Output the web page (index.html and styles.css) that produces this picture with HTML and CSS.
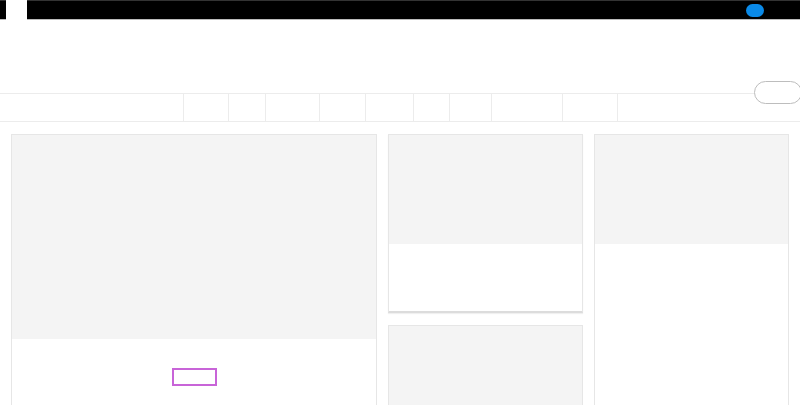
FILE: index.html
```html
<!DOCTYPE html>
<html lang="en">
<head>
    <meta charset="UTF-8">
    <meta name="viewport" content="width=device-width, initial-scale=1.0">
    <title>Home</title>
    <link rel="stylesheet" href="styles.css">
</head>
<body>
    <div class="topbar">
        <div class="topbar-logo"></div>
        <div class="topbar-dot"></div>
    </div>

    <header class="masthead">
        <div class="masthead-space"></div>
        <button class="pill-btn" type="button"></button>
        <nav class="nav">
            <div class="nav-item w-first"></div>
            <div class="nav-item w45"></div>
            <div class="nav-item w37"></div>
            <div class="nav-item w54"></div>
            <div class="nav-item w46"></div>
            <div class="nav-item w48"></div>
            <div class="nav-item w36"></div>
            <div class="nav-item w42"></div>
            <div class="nav-item w71"></div>
            <div class="nav-item w55"></div>
        </nav>
    </header>

    <main class="grid">
        <div class="card card-lead">
            <div class="card-img img-lead"></div>
            <div class="card-body body-lead">
                <div class="tag-box"></div>
            </div>
        </div>

        <div class="col">
            <div class="card card-small">
                <div class="card-img img-small"></div>
                <div class="card-body body-small"></div>
            </div>
            <div class="card card-rest">
                <div class="card-img img-rest"></div>
            </div>
        </div>

        <div class="col">
            <div class="card card-tall">
                <div class="card-img img-small"></div>
                <div class="card-body"></div>
            </div>
        </div>
    </main>
</body>
</html>
```

FILE: styles.css
```css
* {
    margin: 0;
    padding: 0;
    box-sizing: border-box;
    font-family: 'Liberation Sans', Arial, sans-serif;
}

body {
    background: #ffffff;
    color: #333;
    width: 800px;
    height: 405px;
    overflow: hidden;
}

.topbar {
    height: 20px;
    background: #000;
    border-top: 1px solid #333;
    border-bottom: 1px solid #bbb;
    display: flex;
    align-items: center;
    justify-content: space-between;
    padding: 0 36px 0 6px;
}

.topbar-logo {
    width: 21px;
    height: 20px;
    margin-top: -1px;
    background: #fff;
    align-self: flex-start;
}

.topbar-dot {
    width: 18px;
    height: 13px;
    border-radius: 7px;
    background: #0a8ae8;
}

.masthead {
    position: relative;
}

.masthead-space {
    height: 73px;
}

.pill-btn {
    position: absolute;
    top: 61px;
    right: -2px;
    width: 48px;
    height: 23px;
    border: 1px solid #bdbdbd;
    border-radius: 12px;
    background: #fff;
    cursor: pointer;
}

.nav {
    display: flex;
    height: 29px;
    border-top: 1px solid #ececec;
    border-bottom: 1px solid #ececec;
}

.nav-item {
    border-right: 1px solid #ececec;
}

.w-first { width: 184px; }
.w45 { width: 45px; }
.w37 { width: 37px; }
.w54 { width: 54px; }
.w46 { width: 46px; }
.w48 { width: 48px; }
.w36 { width: 36px; }
.w42 { width: 42px; }
.w71 { width: 71px; }
.w55 { width: 55px; }

.grid {
    display: grid;
    grid-template-columns: 366px 195px 195px;
    gap: 11px;
    padding: 12px 11px 0;
    align-items: start;
}

.col {
    display: flex;
    flex-direction: column;
    gap: 12px;
}

.card {
    background: #fff;
    border: 1px solid #e6e6e6;
    border-bottom: none;
}

.card-img {
    background: #f4f4f4;
}

.img-lead {
    height: 204px;
}

.img-small {
    height: 109px;
}

.card-lead {
    height: 271px;
}

.body-lead {
    display: flex;
    justify-content: center;
    padding-top: 29px;
}

.tag-box {
    width: 45px;
    height: 18px;
    border: 2px solid #c864d8;
}

.card-small {
    border-bottom: 2px solid #dcdcdc;
    box-shadow: 0 1px 1px rgba(0, 0, 0, 0.06);
}

.body-small {
    height: 67px;
}

.card-rest {
    height: 80px;
}

.img-rest {
    height: 79px;
}

.card-tall {
    height: 271px;
}
```
